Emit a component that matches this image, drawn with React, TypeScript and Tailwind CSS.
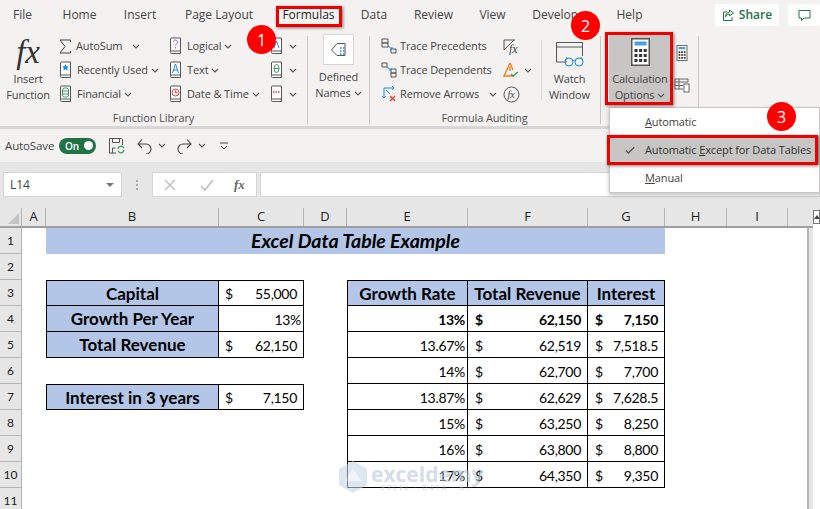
import type { ReactNode } from "react";

const tabs = [
  { label: "File", w: "w-[45px]" },
  { label: "Home", w: "w-[69px]" },
  { label: "Insert", w: "w-[52px]" },
  { label: "Page Layout", w: "w-[106px]" },
  { label: "Formulas", w: "w-[73px]" },
  { label: "Data", w: "w-[58px]" },
  { label: "Review", w: "w-[61px]" },
  { label: "View", w: "w-[57px]" },
  { label: "Developer", w: "w-[80px]" },
  { label: "Help", w: "w-[57px]" },
];

type Right = { rate: string; rev: string; int: string; bold?: boolean };

const rightRows: Record<number, Right> = {
  4: { rate: "13%", rev: "62,150", int: "7,150", bold: true },
  5: { rate: "13.67%", rev: "62,519", int: "7,518.5" },
  6: { rate: "14%", rev: "62,700", int: "7,700" },
  7: { rate: "13.87%", rev: "62,629", int: "7,628.5" },
  8: { rate: "15%", rev: "63,250", int: "8,250" },
  9: { rate: "16%", rev: "63,800", int: "8,800" },
  10: { rate: "17%", rev: "64,350", int: "9,350" },
};

const leftRows: Record<number, { label: string; value: string; money: boolean }> = {
  3: { label: "Capital", value: "55,000", money: true },
  4: { label: "Growth Per Year", value: "13%", money: false },
  5: { label: "Total Revenue", value: "62,150", money: true },
  7: { label: "Interest in 3 years", value: "7,150", money: true },
};

function Chevron({ className = "" }: { className?: string }) {
  return (
    <svg width="8" height="5" viewBox="0 0 8 5" className={className} fill="none" stroke="#555" strokeWidth="1.1">
      <path d="M1 1l3 3 3-3" />
    </svg>
  );
}

// little book used by all the function library buttons
function Book({ children }: { children: ReactNode }) {
  return (
    <svg width="13" height="18" viewBox="0 0 13 18" fill="none" className="shrink-0">
      <path d="M1.5 14.5V2a1 1 0 0 1 1-1h9v15.5h-9a1 1 0 0 1-1-1z" fill="#fff" stroke="#555" />
      <path d="M1.5 14h10" stroke="#555" />
      {children}
    </svg>
  );
}

function RibbonRow({ icon, label, chevron, w, gap = "ml-[3px]" }: { icon: ReactNode; label: string; chevron?: string; w: string; gap?: string }) {
  return (
    <div className={`flex h-[24px] items-center ${w}`}>
      {icon}
      <span className={`${gap} whitespace-nowrap`}>{label}</span>
      {chevron && <Chevron className={chevron} />}
    </div>
  );
}

function Sep() {
  return <div className="mt-[2px] h-[88px] w-px shrink-0 bg-[#c8c6c4]" />;
}

function GroupLabel({ children }: { children: ReactNode }) {
  return <div className="flex h-[24px] items-center justify-center whitespace-nowrap text-[#505050]">{children}</div>;
}

function Calculator({ big }: { big?: boolean }) {
  const w = big ? 19 : 12;
  const h = big ? 28 : 16;
  const dots = [0, 1, 2, 3, 4, 5, 6, 7, 8];
  return (
    <svg width={w} height={h} viewBox="0 0 19 28" className="shrink-0">
      <rect x="0.75" y="0.75" width="17.5" height="26.5" fill="#fff" stroke="#555" strokeWidth="1.5" />
      <rect x="3.5" y="3.5" width="12" height="4" fill="#4a9fe0" />
      {dots.map((d) => (
        <rect key={d} x={3.5 + (d % 3) * 4.6} y={11 + Math.floor(d / 3) * 5} width="3" height="3" fill="#333" />
      ))}
    </svg>
  );
}

function HeaderCell({ w, label }: { w: string; label: string }) {
  return (
    <div className={`flex h-full items-center justify-center border-r border-[#b4b4b4] text-[13px] text-[#222] ${w}`}>{label}</div>
  );
}

function Money({ w, value, bold }: { w: string; value: string; bold?: boolean }) {
  return (
    <div className={`flex h-full items-center justify-between border-b border-r border-black pl-[7px] pr-[6px] pt-[1px] ${w} ${bold ? "font-bold" : ""}`}>
      <span>$</span>
      <span>{value}</span>
    </div>
  );
}

function SheetRow({ n }: { n: number }) {
  const left = leftRows[n];
  const right = rightRows[n];
  return (
    <div className="flex h-[26px]">
      <div className="flex w-[22px] shrink-0 items-center justify-center border-b border-r border-[#b4b4b4] bg-[#e6e6e6] text-[12px] tracking-normal text-[#222]">{n}</div>
      <div className="w-[24px] shrink-0" />
      {n === 1 ? (
        <div className="flex h-full w-[619px] items-center justify-center bg-[#b4c6e7] text-[19.5px] font-bold italic tracking-normal">Excel Data Table Example</div>
      ) : (
        <>
          {left ? (
            <div className={`flex h-full w-[258px] shrink-0 border-b border-black ${n === 3 || n === 7 ? "border-t" : ""}`}>
              <div className="flex h-full w-[173px] items-center justify-center border-l border-r border-black bg-[#b4c6e7] pt-[1px] text-[17px] font-bold tracking-normal">{left.label}</div>
              {left.money ? (
                <div className="flex h-full w-[85px] items-center justify-between border-r border-black pl-[6px] pr-[6px] pt-[1px]">
                  <span>$</span>
                  <span>{left.value}</span>
                </div>
              ) : (
                <div className="flex h-full w-[85px] items-center justify-end border-r border-black pr-[2px] pt-[1px]">{left.value}</div>
              )}
            </div>
          ) : (
            <div className="w-[258px] shrink-0" />
          )}
          <div className="w-[43px] shrink-0" />
          {n === 3 && (
            <div className="flex h-full border-t border-black text-[17px] font-bold tracking-normal">
              <div className="flex w-[121px] items-center justify-center border-b border-l border-r border-black bg-[#b4c6e7] pt-[1px]">Growth Rate</div>
              <div className="flex w-[120px] items-center justify-center border-b border-r border-black bg-[#b4c6e7] pt-[1px]">Total Revenue</div>
              <div className="flex w-[77px] items-center justify-center border-b border-r border-black bg-[#b4c6e7] pt-[1px]">Interest</div>
            </div>
          )}
          {right && (
            <div className="flex h-full">
              <div className={`flex h-full w-[121px] items-center justify-end border-b border-l border-r border-black pr-[2px] pt-[1px] ${right.bold ? "font-bold" : ""}`}>{right.rate}</div>
              <Money w="w-[120px]" value={right.rev} bold={right.bold} />
              <Money w="w-[77px]" value={right.int} bold={right.bold} />
            </div>
          )}
        </>
      )}
    </div>
  );
}

export default function App() {
  return (
    <div className="relative h-[509px] w-[820px] overflow-hidden bg-[#e6e6e6] font-['Open_Sans',sans-serif] text-[11px] tracking-[-0.12px] text-[#444]">
      {/* Tabs */}
      <div className="relative flex h-[32px] items-center bg-[#f3f2f1] pb-[2px] text-[12px] tracking-normal">
        {tabs.map((t) => (
          <div key={t.label} className={`text-center ${t.w} ${t.label === "Formulas" ? "text-[#222]" : ""}`}>
            {t.label}
          </div>
        ))}
        <div className="absolute left-[715px] top-[4px] flex h-[22px] w-[64px] items-center justify-center gap-[4px] rounded-[2px] bg-white text-[12px] font-semibold text-[#217346]">
          <svg width="13" height="13" viewBox="0 0 13 13" fill="none" stroke="#217346">
            <path d="M5 3H1.5v8.5h8.5V8M7.5 1l4 3-4 3V5.2C5.5 5.2 4 6 3.5 8c0-3 1.5-4.7 4-4.9z" />
          </svg>
          Share
        </div>
        <div className="absolute left-[788px] top-[4px] flex h-[22px] w-[32px] items-center justify-center rounded-[2px] bg-white">
          <svg width="13" height="13" viewBox="0 0 13 13" fill="none" stroke="#217346">
            <path d="M1 1.5h11v7.5H6l-2.5 2.5V9H1z" />
          </svg>
        </div>
      </div>

      {/* Ribbon */}
      <div className="flex h-[94px] bg-[#f3f2f1] pt-[2px]">
        {/* Function Library */}
        <div className="w-[307px] shrink-0">
          <div className="flex h-[72px]">
            <div className="flex w-[59px] shrink-0 flex-col items-center pr-[3px] leading-[16px]">
              <div className="mt-[1px] h-[35px] font-['Liberation_Serif',serif] text-[33px] italic leading-[34px] text-[#333]">fx</div>
              <div className="mt-[1px]">Insert</div>
              <div>Function</div>
            </div>
            <div className="w-[110px] shrink-0">
              <RibbonRow
                w="w-[110px]"
                label="AutoSum"
                chevron="ml-[10px]"
                gap="ml-[5px]"
                icon={
                  <svg width="12" height="15" viewBox="0 0 12 15" fill="none" stroke="#444" className="shrink-0">
                    <path d="M11.5 3V1H1l5 6.5L1 14h10.5v-2" />
                  </svg>
                }
              />
              <RibbonRow
                w="w-[110px]"
                label="Recently Used"
                chevron="ml-[3px]"
                gap="ml-[5px]"
                icon={
                  <Book>
                    <path d="M6.5 3l1 2.3 2.4.2-1.8 1.6.6 2.4-2.2-1.3-2.2 1.3.6-2.4-1.8-1.6 2.4-.2z" fill="#1e88e5" />
                  </Book>
                }
              />
              <RibbonRow
                w="w-[110px]"
                label="Financial"
                chevron="ml-[3px]"
                gap="ml-[5px]"
                icon={
                  <Book>
                    <rect x="3.5" y="3" width="6" height="9" rx="2" fill="none" stroke="#3a9a5b" />
                    <path d="M3.5 6h6M3.5 9h6" stroke="#3a9a5b" />
                  </Book>
                }
              />
            </div>
            <div className="w-[101px] shrink-0">
              <RibbonRow
                w="w-[101px]"
                label="Logical"
                chevron="ml-[3px]"
                gap="ml-[5px]"
                icon={
                  <Book>
                    <path d="M4.5 5a2 2 0 1 1 3 1.8c-.7.5-1 .9-1 1.7M6.5 10v1.5" stroke="#a64ac9" />
                  </Book>
                }
              />
              <RibbonRow
                w="w-[101px]"
                label="Text"
                chevron="ml-[3px]"
                gap="ml-[5px]"
                icon={
                  <Book>
                    <path d="M3.5 12L6.5 3l3 9M4.5 9h4" stroke="#1e88e5" />
                  </Book>
                }
              />
              <RibbonRow
                w="w-[101px]"
                label="Date & Time"
                chevron="ml-[3px]"
                gap="ml-[5px]"
                icon={
                  <Book>
                    <circle cx="6.5" cy="7.5" r="3.5" fill="none" stroke="#e53935" />
                    <path d="M6.5 5.5v2h2" stroke="#e53935" />
                  </Book>
                }
              />
            </div>
            <div className="w-[37px] shrink-0">
              <RibbonRow
                w="w-[37px]"
                label=""
                chevron="ml-[3px]"
                icon={
                  <Book>
                    <path d="M4 11L6.5 4 9 11" stroke="#1e88e5" />
                  </Book>
                }
              />
              <RibbonRow
                w="w-[37px]"
                label=""
                chevron="ml-[3px]"
                icon={
                  <Book>
                    <ellipse cx="6.5" cy="7.5" rx="2.5" ry="4" fill="none" stroke="#3a9a5b" />
                    <path d="M4 7.5h5" stroke="#3a9a5b" />
                  </Book>
                }
              />
              <RibbonRow
                w="w-[37px]"
                label=""
                chevron="ml-[3px]"
                icon={
                  <Book>
                    <path d="M3 7h7" stroke="#e53935" strokeWidth="1.5" strokeDasharray="1.5 1" />
                  </Book>
                }
              />
            </div>
          </div>
          <GroupLabel>Function Library</GroupLabel>
        </div>
        <Sep />

        {/* Defined Names */}
        <div className="w-[61px] shrink-0">
          <div className="flex h-[72px] flex-col items-center leading-[16px]">
            <div className="flex h-[31px] w-[31px] items-center justify-center border border-[#d8d6d4] bg-white">
              <svg width="17" height="16" viewBox="0 0 17 16" fill="none" stroke="#555">
                <path d="M7 1.5h8v12H7L1.5 8z" />
                <path d="M10 6h1.5M13 6h1.5M10 9h1.5M13 9h1.5M10 12h1.5M13 12h1.5" stroke="#1e88e5" strokeWidth="1.5" />
              </svg>
            </div>
            <div className="mt-[4px]">Defined</div>
            <div className="flex items-center gap-[3px]">
              Names
              <Chevron />
            </div>
          </div>
        </div>
        <Sep />

        {/* Formula Auditing */}
        <div className="w-[230px] shrink-0">
          <div className="flex h-[72px]">
            <div className="w-[133px] shrink-0 pl-[11px]">
              <RibbonRow
                w="w-[122px]"
                label="Trace Precedents"
                icon={
                  <svg width="16" height="16" viewBox="0 0 16 16" fill="none" stroke="#555" className="shrink-0">
                    <path d="M1 1h6v4H1zM1 5h6v4H1zM10 11h5v4h-5z" />
                    <path d="M7 8l4 3M9 11h2V9" stroke="#1e88e5" />
                  </svg>
                }
              />
              <RibbonRow
                w="w-[122px]"
                label="Trace Dependents"
                icon={
                  <svg width="16" height="16" viewBox="0 0 16 16" fill="none" stroke="#555" className="shrink-0">
                    <path d="M1 1h5v4H1zM10 7h5v4h-5zM10 11h5v4h-5z" />
                    <path d="M6 5l4 3M8 8h2V6" stroke="#1e88e5" />
                  </svg>
                }
              />
              <RibbonRow
                w="w-[122px]"
                label="Remove Arrows"
                chevron="ml-[10px]"
                icon={
                  <svg width="16" height="16" viewBox="0 0 16 16" fill="none" className="shrink-0">
                    <path d="M3 2h10M11 0l2 2-2 2M3 2v10M1 10l2 2 2-2M5 4l4 4" stroke="#1e88e5" />
                    <path d="M9 10l5 5M14 10l-5 5" stroke="#e53935" strokeWidth="1.3" />
                  </svg>
                }
              />
            </div>
            <div className="w-[38px] shrink-0">
              <div className="flex h-[24px] items-center">
                <svg width="17" height="17" viewBox="0 0 17 17" fill="none" stroke="#555" className="shrink-0">
                  <path d="M1 2h11M1 2v10M1 12l10-10" />
                  <text x="6" y="15" fontFamily="Liberation Serif" fontStyle="italic" fontSize="12" fill="#444" stroke="none">
                    fx
                  </text>
                </svg>
              </div>
              <div className="flex h-[24px] items-center">
                <svg width="17" height="16" viewBox="0 0 17 16" fill="none" className="shrink-0">
                  <path d="M7 1L1 14h10" stroke="#e8811a" strokeWidth="1.4" />
                  <path d="M7 1l3 7M7 5v4" stroke="#e8811a" strokeWidth="1.4" />
                  <path d="M8 12l2 2 5-4" stroke="#3a9a5b" strokeWidth="1.4" />
                </svg>
                <Chevron className="ml-[4px]" />
              </div>
              <div className="flex h-[24px] items-center">
                <svg width="17" height="17" viewBox="0 0 17 17" fill="none" stroke="#555" className="shrink-0">
                  <circle cx="8.5" cy="8.5" r="7.5" />
                  <text x="4.5" y="12" fontFamily="Liberation Serif" fontStyle="italic" fontSize="10" fill="#444" stroke="none">
                    fx
                  </text>
                </svg>
              </div>
            </div>
            <div className="mt-[6px] h-[60px] w-px shrink-0 bg-[#dcdad8]" />
            <div className="flex w-[57px] shrink-0 flex-col items-center pr-[2px] leading-[16px]">
              <svg width="29" height="28" viewBox="0 0 29 28" fill="none" className="mt-[7px] shrink-0">
                <path d="M12 21H1.5V1.5h26V15M1.5 6h26" stroke="#555" />
                <circle cx="14" cy="21" r="4" stroke="#1e88e5" />
                <circle cx="24" cy="21" r="4" stroke="#1e88e5" />
                <path d="M18 20c1-1 2-1 2 0M10 20l2-4M28 20l-2-4" stroke="#1e88e5" />
              </svg>
              <div className="mt-[2px]">Watch</div>
              <div>Window</div>
            </div>
          </div>
          <GroupLabel>
            <span className="mr-[1px]">Formula Auditing</span>
          </GroupLabel>
        </div>
        <Sep />

        {/* Calculation */}
        <div className="flex h-[72px] w-[97px] shrink-0">
          <div className="ml-[8px] flex h-[69px] w-[62px] flex-col items-center bg-[#c8c6c4] pt-[4px] leading-[16px]">
            <Calculator big />
            <div className="mt-[5px] whitespace-nowrap">Calculation</div>
            <div className="flex items-center gap-[3px]">
              Options
              <Chevron />
            </div>
          </div>
          <div className="flex flex-col gap-[17px] pl-[5px] pt-[11px]">
            <Calculator />
            <svg width="16" height="15" viewBox="0 0 16 15" fill="none" stroke="#666" className="-ml-[2px]">
              <path d="M1 1h13v3H1zM1 4v7h8M5 1v10M1 7.5h8" />
              <rect x="10" y="6" width="5" height="8" fill="#fff" />
            </svg>
          </div>
        </div>
        <Sep />
      </div>

      <div className="h-[3px] bg-[#d6d6d6]" />

      {/* Quick access */}
      <div className="flex h-[33px] items-center bg-[#f3f2f1] pl-[5px]">
        <span className="w-[48px] whitespace-nowrap text-[11.5px]">AutoSave</span>
        <div className="ml-[6px] flex h-[16px] w-[37px] items-center justify-between rounded-full bg-[#217346] pl-[6px] pr-[3px] text-[10px] font-semibold leading-none text-white">
          On
          <div className="h-[9px] w-[9px] rounded-full bg-white" />
        </div>
        <svg width="18" height="18" viewBox="0 0 18 18" fill="none" stroke="#555" className="ml-[12px]">
          <path d="M8 16H1.5V1.5h12l1 1V8M4.5 1.5v4h7v-4M4.5 16v-5h3" />
          <path d="M10 12a3 3 0 0 1 5-2l1 1M16 13a3 3 0 0 1-5 2l-1-1" stroke="#3a9a5b" strokeWidth="1.3" />
        </svg>
        <svg width="15" height="16" viewBox="0 0 15 16" fill="none" stroke="#444" className="ml-[11px]">
          <path d="M1 6h8a5 5 0 0 1 0 10M5 1.5L1 6l4 4" strokeWidth="1.1" />
        </svg>
        <Chevron className="ml-[6px]" />
        <svg width="15" height="16" viewBox="0 0 15 16" fill="none" stroke="#444" className="ml-[11px]">
          <path d="M14 6H6a5 5 0 0 0 0 10M10 1.5L14 6l-4 4" strokeWidth="1.1" />
        </svg>
        <Chevron className="ml-[6px]" />
        <svg width="8" height="8" viewBox="0 0 8 8" fill="none" stroke="#444" className="ml-[14px]">
          <path d="M0 1h8M1 4l3 3 3-3" />
        </svg>
      </div>

      {/* Formula bar */}
      <div className="flex h-[46px] bg-[#e6e6e6] pt-[10px]">
        <div className="ml-[3px] flex h-[25px] w-[119px] items-center justify-between border border-[#d4d4d4] bg-white pl-[6px] pr-[7px] text-[12px]">
          L14
          <div className="h-0 w-0 border-x-[4px] border-t-[4px] border-x-transparent border-t-[#777]" />
        </div>
        <div className="ml-[14px] mt-[8px] flex h-[10px] w-[2px] flex-col justify-between">
          <div className="h-[2px] w-[2px] bg-[#aaa]" />
          <div className="h-[2px] w-[2px] bg-[#aaa]" />
          <div className="h-[2px] w-[2px] bg-[#aaa]" />
        </div>
        <div className="ml-[14px] flex h-[25px] w-[105px] items-center border border-[#d4d4d4] bg-white pl-[11px]">
          <svg width="12" height="12" viewBox="0 0 12 12" stroke="#bbb" strokeWidth="1.2">
            <path d="M1 1l10 10M11 1L1 11" />
          </svg>
          <svg width="14" height="12" viewBox="0 0 14 12" fill="none" stroke="#bbb" strokeWidth="1.5" className="ml-[24px]">
            <path d="M1 7l4 4 8-10" />
          </svg>
          <span className="ml-[20px] font-['Liberation_Serif',serif] text-[13px] font-bold italic text-[#666]">fx</span>
        </div>
        <div className="ml-[3px] h-[25px] flex-1 border border-[#d4d4d4] bg-white" />
      </div>

      {/* Column headers */}
      <div className="flex h-[20px] border-b-2 border-[#a0a0a0] bg-[#e6e6e6] tracking-normal">
        <div className="flex w-[22px] items-end justify-end border-r border-[#b4b4b4] pb-[2px] pr-[2px]">
          <div className="h-0 w-0 border-b-[11px] border-l-[11px] border-b-[#c4c4c4] border-l-transparent" />
        </div>
        <HeaderCell w="w-[24px]" label="A" />
        <HeaderCell w="w-[173px]" label="B" />
        <HeaderCell w="w-[85px]" label="C" />
        <HeaderCell w="w-[43px]" label="D" />
        <HeaderCell w="w-[121px]" label="E" />
        <HeaderCell w="w-[120px]" label="F" />
        <HeaderCell w="w-[77px]" label="G" />
        <HeaderCell w="w-[62px]" label="H" />
        <HeaderCell w="w-[61px]" label="I" />
      </div>

      {/* Sheet */}
      <div className="flex h-[281px]">
        <div className="w-[809px] shrink-0 border-r-2 border-[#b4b4b4] bg-white font-['Lato',sans-serif] text-[14px] tracking-[-0.3px] text-black">
          {[1, 2, 3, 4, 5, 6, 7, 8, 9, 10, 11].map((n) => (
            <SheetRow key={n} n={n} />
          ))}
        </div>
        <div className="flex-1" />
      </div>
      <div className="absolute left-[813px] top-[210px] flex h-[14px] w-[7px] items-center justify-center border border-[#777] bg-white">
        <div className="h-0 w-0 border-x-[3px] border-b-[4px] border-x-transparent border-b-[#444]" />
      </div>
      <div className="absolute left-[813px] top-[224px] h-[285px] w-[7px] bg-white" />

      {/* Watermark */}
      <div className="pointer-events-none absolute left-[339px] top-[461px] flex items-center tracking-normal opacity-60">
        <svg width="28" height="32" viewBox="0 0 28 32">
          <path d="M14 0l14 8v16l-14 8-14-8V8z" fill="#c9d6e6" />
          <path d="M14 7l8 13H6z" fill="#e6ecf4" />
        </svg>
        <div className="ml-[4px] leading-none">
          <div className="text-[21px] font-bold leading-[20px] text-[#b9c8da]">exceldemy</div>
          <div className="ml-[10px] whitespace-nowrap text-[7px] tracking-[2px] text-[#aeb6c0]">EXCEL · DATA · BI</div>
        </div>
      </div>

      {/* Calculation menu */}
      <div className="absolute left-[609px] top-[107px] w-[211px] border border-[#c8c6c4] bg-white shadow-[0_2px_4px_rgba(0,0,0,0.25)]">
        <div className="flex h-[28px] items-center pl-[35px]">
          <span>
            <u>A</u>utomatic
          </span>
        </div>
        <div className="flex h-[28px] items-center bg-[#c8c6c4] pl-[15px] text-[#333]">
          <svg width="10" height="9" viewBox="0 0 12 10" fill="none" stroke="#555" strokeWidth="1.8">
            <path d="M1 5l3 3 7-7" />
          </svg>
          <span className="ml-[10px] whitespace-nowrap">
            Automatic <u>E</u>xcept for Data Tables
          </span>
        </div>
        <div className="flex h-[28px] items-center pl-[35px]">
          <span>
            <u>M</u>anual
          </span>
        </div>
      </div>

      {/* Red call-outs */}
      <div className="absolute left-[276px] top-[6px] h-[21px] w-[66px] border-[3px] border-[#ee0000] shadow-[1px_1px_3px_rgba(0,0,0,0.5)]" />
      <div className="absolute left-[605px] top-[32px] h-[73px] w-[68px] border-[3px] border-[#ee0000] shadow-[1px_1px_3px_rgba(0,0,0,0.5)]" />
      <div className="absolute left-[607px] top-[135px] h-[30px] w-[211px] border-[3px] border-[#ee0000] shadow-[1px_1px_3px_rgba(0,0,0,0.5)]" />
      <div className="absolute left-[247px] top-[25px] flex h-[29px] w-[29px] items-center justify-center rounded-full bg-[#fe0000] text-[16px] text-white">1</div>
      <div className="absolute left-[571px] top-[11px] flex h-[29px] w-[29px] items-center justify-center rounded-full bg-[#fe0000] text-[16px] text-white">2</div>
      <div className="absolute left-[767px] top-[102px] flex h-[29px] w-[29px] items-center justify-center rounded-full bg-[#fe0000] text-[16px] text-white">3</div>
    </div>
  );
}
